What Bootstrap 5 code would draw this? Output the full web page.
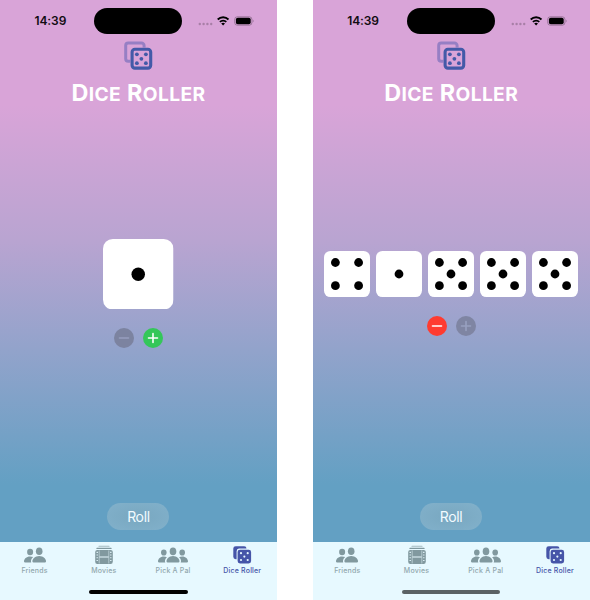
<!DOCTYPE html>
<html lang="en">
<head>
<meta charset="utf-8">
<meta name="viewport" content="width=device-width, initial-scale=1">
<title>Dice Roller</title>
<link href="https://cdn.jsdelivr.net/npm/bootstrap@5.3.0/dist/css/bootstrap.min.css" rel="stylesheet">
<style>
body{font-family:Inter,"Liberation Sans",sans-serif;background:#fff;width:590px;height:600px;overflow:hidden}
svg{display:block;flex:none}
.screens{gap:35.8px}
.phone{width:276.9px;height:600px;background:linear-gradient(#d9a4d8 0,#d9a4d8 105px,#b9a4d1 240px,#92a3cb 350px,#63a0c3 485px,#63a0c3 100%)}
.status{height:41px;padding:7.5px 21.5px 0 34.5px}
.clock{font-size:12px;font-weight:600;line-height:26px;width:59.7px;letter-spacing:-.1px;color:#120c12}
.island{width:88.3px;height:26.5px;border-radius:14px;background:#000}
.signals{height:26px;width:58px;margin-left:15px}
.app-logo{transform:translateX(.5px)}
.title-row{font-size:23.4px;font-weight:650;line-height:28px;height:28px;color:#fff;margin-top:8px;letter-spacing:.38px;white-space:pre}
.title-row span{font-size:19.2px}
.board{min-height:0}
.one .dice{padding-top:131.8px}
.five .dice{padding-top:144px;gap:6px}
.die-big{width:70.5px;height:70.5px}
.die-sm{width:46px;height:46px}
.steppers{gap:8.8px;margin-top:18.6px}
.roll{width:62px;height:27px;border-radius:14px;background:radial-gradient(ellipse at center,#7aa9c2 20%,#82b1cb 100%);color:#f2fbff;font-size:14px;letter-spacing:-.35px;line-height:27px;padding:0;border:0;margin-bottom:11.7px}
.tabs{height:58.5px;background:#e7f9ff}
.tab-item{width:69.3px;padding-top:3.4px;color:#81999f;font-size:7px;line-height:10px;font-weight:500}
.tab-item span{color:#91a7ad;margin-top:1.6px;letter-spacing:.2px;white-space:nowrap}
.tab-item.chosen,.tab-item.chosen span{color:#4655a8}
.home-bar{width:98.6px;height:3.6px;border-radius:2px;background:#000;margin:13.8px auto 0}
.five .home-bar{background:#5a6265}
</style>
<script src="https://cdn.jsdelivr.net/npm/bootstrap@5.3.0/dist/js/bootstrap.bundle.min.js"></script>
</head>
<body>
<svg width="0" height="0" class="position-absolute" aria-hidden="true">
<symbol id="signals" viewBox="0 0 58 26">
 <g fill="#000" opacity=".22"><circle cx="2.8" cy="16" r="1.2"/><circle cx="6.6" cy="16" r="1.2"/><circle cx="10.4" cy="16" r="1.2"/><circle cx="14.2" cy="16" r="1.2"/></g>
 <g fill="none" stroke="#000" stroke-width="1.8"><path d="M20.7 11.5a7.6 7.6 0 0 1 10.8 0"/><path d="M22.9 13.9a4.5 4.500 0 0 1 6.400 0"/></g>
 <path d="M24.200 15.600a2.900 2.900 0 0 1 3.800 0l-1.900 2z"/>
 <rect x="37.700" y="8.800" width="17.200" height="8.400" rx="2.600" fill="none" stroke="#000" stroke-opacity=".35" stroke-width=".8"/><rect x="38.900" y="9.800" width="14.800" height="6.400" rx="1.800"/><path d="M55.900 11.500q1.300 1.500 0 3z" opacity=".4"/>
</symbol>
<symbol id="logo" viewBox="0 0 30 30">
 <path d="M6.800 20.300H4.700a2.500 2.500 0 0 1-2.500-2.500V4.600a2.500 2.500 0 0 1 2.500-2.500h13.200a2.700 2.700 0 0 1 2.700 2.700v1.700" fill="none" stroke="#967fc4" stroke-width="3"/>
 <rect x="8.600" y="8.300" width="18.600" height="18.800" rx="2.800" fill="none" stroke="#435aa8" stroke-width="3.100"/>
 <g fill="#435aa8"><circle cx="13.400" cy="13.300" r="1.900"/><circle cx="22.400" cy="13.300" r="1.900"/><circle cx="17.900" cy="17.800" r="1.900"/><circle cx="13.400" cy="22.200" r="1.900"/><circle cx="22.400" cy="22.200" r="1.900"/></g>
</symbol>
<symbol id="one-pip" viewBox="0 0 46 46"><rect width="46" height="46" rx="6.4" fill="#fff"/><circle cx="23" cy="23" r="4.4"/></symbol>
<symbol id="four-pips" viewBox="0 0 46 46"><rect width="46" height="46" rx="6.4" fill="#fff"/><circle cx="11.4" cy="11.5" r="4.4"/><circle cx="34.6" cy="11.5" r="4.4"/><circle cx="11.4" cy="34.7" r="4.4"/><circle cx="34.6" cy="34.7" r="4.4"/></symbol>
<symbol id="five-pips" viewBox="0 0 46 46"><use href="#four-pips"/><circle cx="23" cy="23" r="4.4"/></symbol>
<symbol id="minus" viewBox="0 0 20 20"><circle cx="10" cy="10" r="10" fill="currentColor"/><path d="M5.5 10h9" stroke="var(--sign)" stroke-width="1.6" stroke-linecap="round"/></symbol>
<symbol id="plus" viewBox="0 0 20 20"><circle cx="10" cy="10" r="10" fill="currentColor"/><path d="M5.5 10h9M10 5.5v9" stroke="var(--sign)" stroke-width="1.6" stroke-linecap="round"/></symbol>
<symbol id="friends" viewBox="0 0 32 20">
 <g fill="currentColor"><ellipse cx="11.100" cy="7" rx="3" ry="3.300"/><ellipse cx="20.200" cy="6.300" rx="3.300" ry="3.800"/><path d="M12.200 17.500H6.200q-1.200 0-1.200-1.100c0-2.400 2.400-5 6-5q1.800 0 3.200.7c-2 1.500-2.600 3.700-2 5.400z"/><path d="M14.600 17.500q-1.200 0-1.200-1.100c0-2.500 2.700-5.300 6.800-5.300s6.800 2.800 6.800 5.300q0 1.100-1.200 1.100z"/></g>
</symbol>
<symbol id="movies" viewBox="0 0 32 20">
 <path fill="none" stroke="currentColor" stroke-width="1.100" stroke-linecap="round" d="M11 1.200h10" opacity=".65"/><path d="M9 3.400h14" stroke="currentColor" stroke-width="1.300" stroke-linecap="round"/>
 <rect x="7.200" y="4.900" width="17.600" height="14.100" rx="2.200" fill="currentColor"/>
 <path d="M11.200 5.400v13.100M20.800 5.400v13.100" stroke="#e7f9ff" stroke-width=".5"/><path d="M11.400 12h9.200" stroke="#e7f9ff" stroke-width="1"/>
 <path d="M9.200 6.800v10.800M22.800 6.800v10.800" stroke="#e7f9ff" stroke-width="1.300" stroke-dasharray="1.100 1.600"/>
</symbol>
<symbol id="pals" viewBox="0 0 32 20">
 <g fill="currentColor"><ellipse cx="6.800" cy="7.500" rx="2.800" ry="3.100"/><ellipse cx="25.200" cy="7.500" rx="2.800" ry="3.100"/><ellipse cx="16" cy="6.400" rx="3.300" ry="3.800"/><path d="M8.300 17.500H2.200Q1 17.500 1 16.500c0-2.500 2.300-5 5.800-5q1.700 0 3.100.7c-1.900 1.400-2.400 3.900-1.600 5.300zM23.700 17.500h6.100q1.200 0 1.200-1c0-2.500-2.300-5-5.800-5q-1.700 0-3.100.7c1.900 1.400 2.400 3.900 1.600 5.300z"/><path d="M10.700 17.500q-1.200 0-1.200-1.100c0-2.500 2.600-5.300 6.500-5.300s6.500 2.800 6.500 5.300q0 1.100-1.200 1.100z"/></g>
</symbol>
<symbol id="dice-tab" viewBox="0 0 32 20">
 <path fill="currentColor" d="M10.600 14.200h-.9a2.400 2.400 0 0 1-2.400-2.400V3.600a2.400 2.400 0 0 1 2.400-2.400h8.400a2.400 2.400 0 0 1 2.400 2.400H13a2.700 2.700 0 0 0-2.400 2.600z"/>
 <rect x="11.600" y="4.700" width="13.500" height="13.800" rx="2.400" fill="currentColor"/>
 <g fill="#e7f9ff"><circle cx="15" cy="8.200" r="1.100"/><circle cx="21.700" cy="8.200" r="1.100"/><circle cx="18.350" cy="11.600" r="1.100"/><circle cx="15" cy="15" r="1.100"/><circle cx="21.700" cy="15" r="1.100"/></g>
</symbol>
</svg>

<main class="screens d-flex">
 <section class="phone one d-flex flex-column flex-shrink-0">
  <div class="status d-flex"><div class="clock">14:39</div><div class="island"></div><svg class="signals"><use href="#signals"/></svg></div>
  <svg class="app-logo mx-auto" width="30" height="30"><use href="#logo"/></svg>
  <h1 class="title-row text-center mb-0">D<span>ICE</span> R<span>OLLER</span></h1>
  <div class="board d-flex flex-column align-items-center flex-grow-1">
   <div class="dice d-flex"><svg class="die-big"><use href="#one-pip"/></svg></div>
   <div class="steppers d-flex">
    <svg width="20" height="20" style="color:#7c83a0;--sign:#969fbe"><use href="#minus"/></svg>
    <svg width="20" height="20" style="color:#34c759;--sign:#fff"><use href="#plus"/></svg>
   </div>
   <button class="roll btn mt-auto">Roll</button>
  </div>
  <nav class="tabs">
   <div class="d-flex">
    <div class="tab-item d-flex flex-column align-items-center"><svg width="32" height="20"><use href="#friends"/></svg><span>Friends</span></div>
    <div class="tab-item d-flex flex-column align-items-center"><svg width="32" height="20"><use href="#movies"/></svg><span>Movies</span></div>
    <div class="tab-item d-flex flex-column align-items-center"><svg width="32" height="20"><use href="#pals"/></svg><span>Pick A Pal</span></div>
    <div class="tab-item chosen d-flex flex-column align-items-center"><svg width="32" height="20"><use href="#dice-tab"/></svg><span>Dice Roller</span></div>
   </div>
   <div class="home-bar"></div>
  </nav>
 </section>

 <section class="phone five d-flex flex-column flex-shrink-0">
  <div class="status d-flex"><div class="clock">14:39</div><div class="island"></div><svg class="signals"><use href="#signals"/></svg></div>
  <svg class="app-logo mx-auto" width="30" height="30"><use href="#logo"/></svg>
  <h1 class="title-row text-center mb-0">D<span>ICE</span> R<span>OLLER</span></h1>
  <div class="board d-flex flex-column align-items-center flex-grow-1">
   <div class="dice d-flex">
    <svg class="die-sm"><use href="#four-pips"/></svg>
    <svg class="die-sm"><use href="#one-pip"/></svg>
    <svg class="die-sm"><use href="#five-pips"/></svg>
    <svg class="die-sm"><use href="#five-pips"/></svg>
    <svg class="die-sm"><use href="#five-pips"/></svg>
   </div>
   <div class="steppers d-flex">
    <svg width="20" height="20" style="color:#ff3b30;--sign:#fff"><use href="#minus"/></svg>
    <svg width="20" height="20" style="color:#7f85a3;--sign:#98a0c0"><use href="#plus"/></svg>
   </div>
   <button class="roll btn mt-auto">Roll</button>
  </div>
  <nav class="tabs">
   <div class="d-flex">
    <div class="tab-item d-flex flex-column align-items-center"><svg width="32" height="20"><use href="#friends"/></svg><span>Friends</span></div>
    <div class="tab-item d-flex flex-column align-items-center"><svg width="32" height="20"><use href="#movies"/></svg><span>Movies</span></div>
    <div class="tab-item d-flex flex-column align-items-center"><svg width="32" height="20"><use href="#pals"/></svg><span>Pick A Pal</span></div>
    <div class="tab-item chosen d-flex flex-column align-items-center"><svg width="32" height="20"><use href="#dice-tab"/></svg><span>Dice Roller</span></div>
   </div>
   <div class="home-bar"></div>
  </nav>
 </section>
</main>
</body>
</html>
